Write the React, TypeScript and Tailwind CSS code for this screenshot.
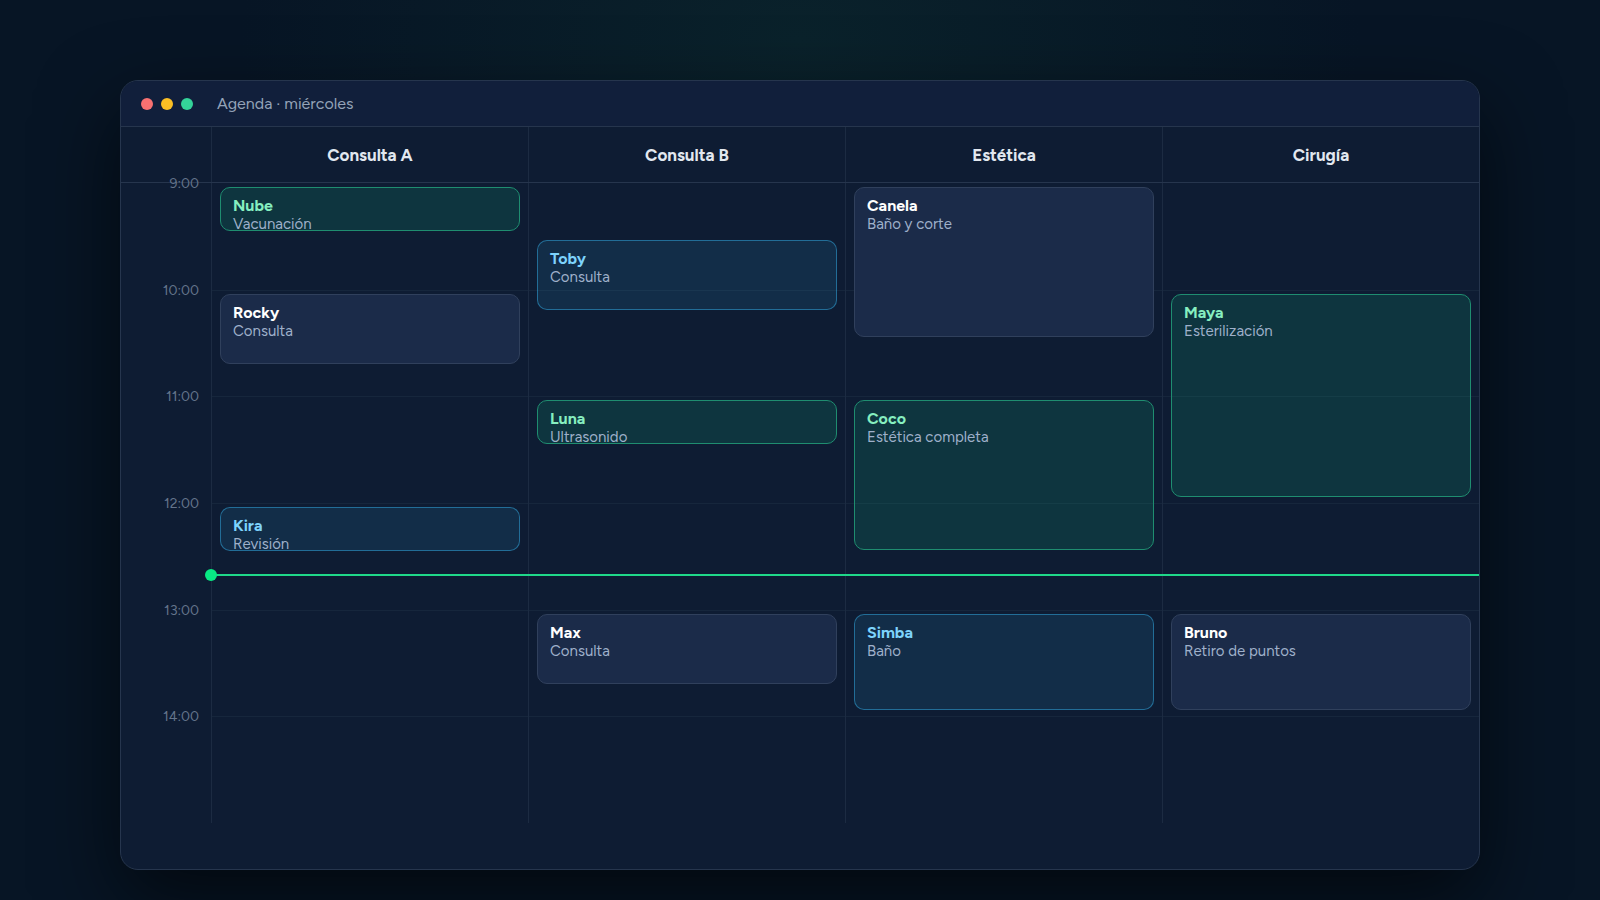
type Tone = "green" | "blue" | "slate";

type Appointment = {
  pet: string;
  service: string;
  /** Minutes after opening time. */
  start: number;
  duration: number;
  tone: Tone;
};

type Room = { name: string; appointments: Appointment[] };

const SLOT = 15;
const HOURS = ["9:00", "10:00", "11:00", "12:00", "13:00", "14:00"];
const DAY_MINUTES = HOURS.length * 60;
const NOW = 220;

const ROOMS: Room[] = [
  {
    name: "Consulta A",
    appointments: [
      { pet: "Nube", service: "Vacunación", start: 0, duration: 30, tone: "green" },
      { pet: "Rocky", service: "Consulta", start: 60, duration: 45, tone: "slate" },
      { pet: "Kira", service: "Revisión", start: 180, duration: 30, tone: "blue" },
    ],
  },
  {
    name: "Consulta B",
    appointments: [
      { pet: "Toby", service: "Consulta", start: 30, duration: 45, tone: "blue" },
      { pet: "Luna", service: "Ultrasonido", start: 120, duration: 30, tone: "green" },
      { pet: "Max", service: "Consulta", start: 240, duration: 45, tone: "slate" },
    ],
  },
  {
    name: "Estética",
    appointments: [
      { pet: "Canela", service: "Baño y corte", start: 0, duration: 90, tone: "slate" },
      { pet: "Coco", service: "Estética completa", start: 120, duration: 90, tone: "green" },
      { pet: "Simba", service: "Baño", start: 240, duration: 60, tone: "blue" },
    ],
  },
  {
    name: "Cirugía",
    appointments: [
      { pet: "Maya", service: "Esterilización", start: 60, duration: 120, tone: "green" },
      { pet: "Bruno", service: "Retiro de puntos", start: 240, duration: 60, tone: "slate" },
    ],
  },
];

const CARD: Record<Tone, string> = {
  green: "border-[#1f8d70] bg-[#10b981]/16",
  blue: "border-[#38bdf8]/45 bg-[#38bdf8]/11",
  slate: "border-[#30405c] bg-[#1b2b49]",
};

const PET: Record<Tone, string> = {
  green: "text-[#86efc0]",
  blue: "text-[#7dd3fc]",
  slate: "text-white",
};

function AppointmentCard({ pet, service, start, duration, tone }: Appointment) {
  return (
    <article
      className={`mx-2 mt-1 mb-[6px] min-h-11 overflow-hidden rounded-[10px] border px-3 pt-[9px] leading-[18px] ${CARD[tone]}`}
      style={{ gridRow: `${start / SLOT + 1} / span ${duration / SLOT}` }}
    >
      <h3 className={`text-base leading-[18px] font-bold ${PET[tone]}`}>{pet}</h3>
      <p className="text-[15px] leading-[18px] text-[#9fb0ca]">{service}</p>
    </article>
  );
}

function TitleBar() {
  return (
    <header className="flex h-[46px] items-center border-b border-[#26354d] bg-[#111f3b] px-5">
      <div className="flex gap-2" aria-hidden="true">
        <span className="size-3 rounded-full bg-[#f87171]" />
        <span className="size-3 rounded-full bg-[#fbbf24]" />
        <span className="size-3 rounded-full bg-[#34d399]" />
      </div>
      <h1 className="ml-6 text-base text-[#94a3b8]">Agenda · miércoles</h1>
    </header>
  );
}

export default function App() {
  return (
    <main className="min-h-screen bg-[#071525] bg-[radial-gradient(ellipse_560px_360px_at_50%_40px,#0a222b,transparent)] px-[120px] pt-20 pb-[30px] font-['Figtree','Lato',sans-serif]">
      <section className="overflow-hidden rounded-[18px] border border-[#26354d] bg-[#0e1c33] pb-[46px] shadow-[0_30px_80px_rgba(0,0,0,0.6)]">
        <TitleBar />
        <div className="grid h-14 grid-cols-[90px_repeat(4,1fr)] border-b border-[#26354d]">
          <div />
          {ROOMS.map((room) => (
            <h2
              key={room.name}
              className="flex items-center justify-center border-l border-[#1c2b42] pt-0.5 text-[17px] font-bold text-[#e2e8f0]"
            >
              {room.name}
            </h2>
          ))}
        </div>
        <div className="grid h-[640px] grid-cols-[90px_1fr] grid-rows-1">
          <div className="grid grid-rows-6 pr-3 text-right text-sm leading-5 text-[#64748b]">
            {HOURS.map((hour) => (
              <time key={hour} className="-mt-[9px]">
                {hour}
              </time>
            ))}
          </div>
          <div className="relative grid grid-cols-4 grid-rows-1">
            <div className="absolute inset-0 grid grid-rows-6" aria-hidden="true">
              {HOURS.map((hour) => (
                <div key={hour} className="border-t border-[#16263c] first:border-transparent" />
              ))}
            </div>
            {ROOMS.map((room) => (
              <div key={room.name} className="relative grid grid-rows-[repeat(24,minmax(0,1fr))] border-l border-[#1c2b42]">
                {room.appointments.map((item) => (
                  <AppointmentCard key={item.pet} {...item} />
                ))}
              </div>
            ))}
            <div
              className="absolute inset-x-0 flex h-0.5 items-center bg-[#1fd88a]"
              style={{ top: `${(NOW / DAY_MINUTES) * 100}%` }}
              aria-hidden="true"
            >
              <span className="-ml-[6px] size-3 shrink-0 rounded-full bg-[#08ea84]" />
            </div>
          </div>
        </div>
      </section>
    </main>
  );
}
